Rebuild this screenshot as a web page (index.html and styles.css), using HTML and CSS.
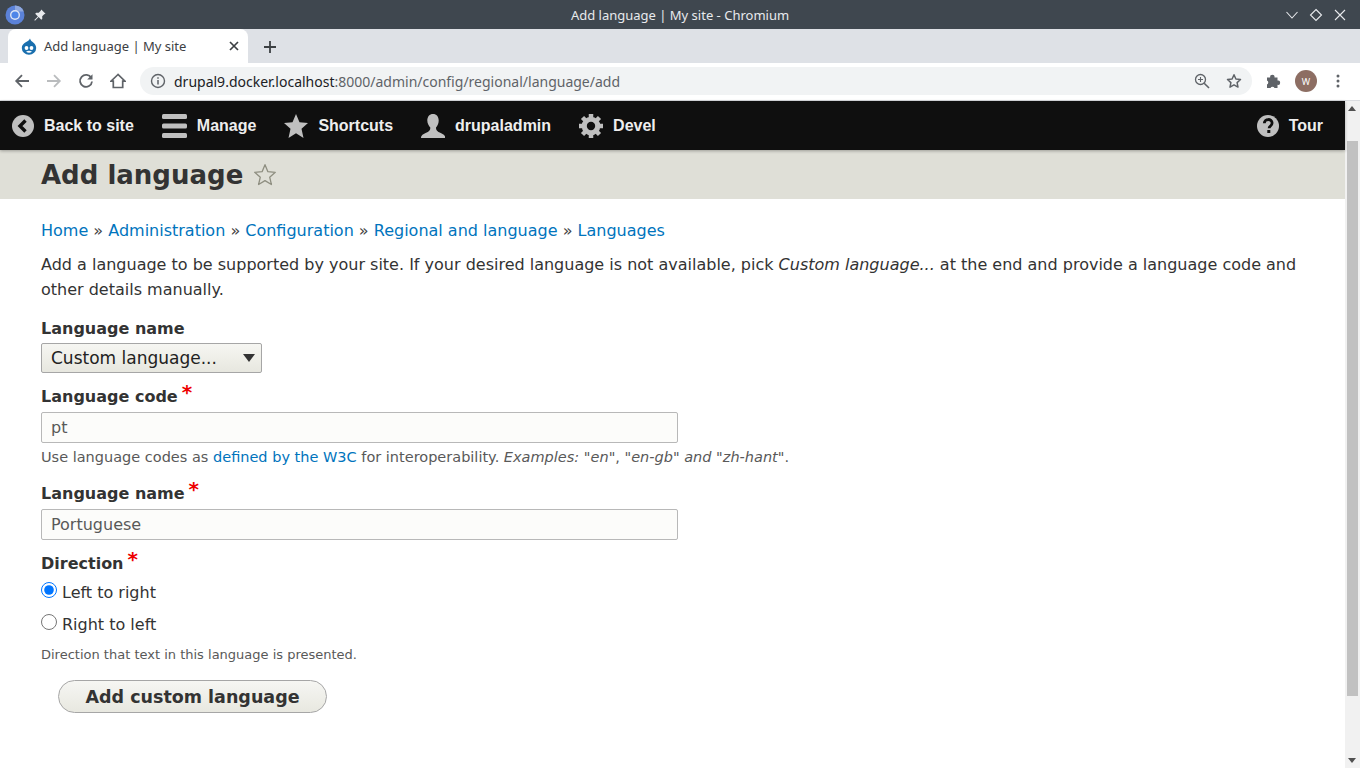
FILE: index.html
```html
<!DOCTYPE html>
<html lang="en">
<head>
<meta charset="utf-8">
<title>Add language | My site</title>
<link rel="stylesheet" href="styles.css">
</head>
<body>
<div class="window">
  <div class="titlebar">
    <div class="tb-left">
      <svg class="app-icon" width="20" height="20" viewBox="0 0 20 20"><circle cx="10" cy="10" r="9.5" fill="#5b82d8"/><path d="M10 .5A9.5 9.5 0 0 1 18.8 6.5H10z" fill="#8fa8de"/><circle cx="10" cy="10" r="5" fill="#dfe6f5"/><circle cx="10" cy="10" r="3.6" fill="#4f86e8"/></svg>
      <svg class="pin-icon" width="14" height="14" viewBox="0 0 14 14"><path d="M8.3 1.5l4.2 4.2-1.3.6-2 2 .1 2.5-1 1L5.6 9.100 2 12.700l-.7-.7 3.600-3.600L2.200 5.700l1-1 2.500.1 2-2z" fill="#e8eaed"/></svg>
    </div>
    <div class="tb-title">Add language | My site - Chromium</div>
    <div class="tb-controls">
      <svg width="14" height="14" viewBox="0 0 14 14"><path d="M1.500 4l5.500 6 5.500-6" fill="none" stroke="#e8eaed" stroke-width="1.100"/></svg>
      <svg width="14" height="14" viewBox="0 0 14 14"><path d="M7 1.500L12.500 7 7 12.500 1.500 7z" fill="none" stroke="#e8eaed" stroke-width="1.100"/></svg>
      <svg width="14" height="14" viewBox="0 0 14 14"><path d="M2 2l10 10M12 2L2 12" fill="none" stroke="#e8eaed" stroke-width="1.100"/></svg>
    </div>
  </div>
  <div class="tabstrip">
    <div class="tab">
      <svg class="fav" width="16" height="17" viewBox="0 0 16 17"><path d="M9 .5c.4 2 2 3 3.500 4.200C14 6 15.200 7.700 15.200 10A7.200 6.700 0 0 1 .8 10c0-2.600 1.700-4.300 3.500-5.400C6 3.600 8 2.600 9 .5z" fill="#1a6fae"/><circle cx="5.500" cy="10" r="1.900" fill="#fff"/><circle cx="10.500" cy="10" r="1.900" fill="#fff"/><path d="M5 13.800c2-1.300 4-1.300 6 0-2 1.200-4 1.200-6 0z" fill="#fff"/></svg>
      <span class="tab-title">Add language | My site</span>
      <svg class="tab-close" width="10" height="10" viewBox="0 0 10 10"><path d="M1 1l8 8M9 1L1 9" stroke="#3c4043" stroke-width="1.700" fill="none"/></svg>
    </div>
    <svg class="newtab" width="14" height="14" viewBox="0 0 14 14"><path d="M7 1v12M1 7h12" stroke="#3c4043" stroke-width="1.800" fill="none"/></svg>
  </div>
  <div class="navbar">
    <div class="nav-buttons">
      <svg width="16" height="16" viewBox="0 0 16 16"><path d="M15 8H2.500M8 2.200L2.200 8 8 13.800" fill="none" stroke="#5f6368" stroke-width="1.800"/></svg>
      <svg width="16" height="16" viewBox="0 0 16 16"><path d="M1 8h12.500M8 2.200L13.800 8 8 13.800" fill="none" stroke="#babcbe" stroke-width="1.800"/></svg>
      <svg width="16" height="16" viewBox="0 0 16 16"><path d="M13.300 5A6 6 0 1 0 14 8.500" fill="none" stroke="#5f6368" stroke-width="1.800"/><path d="M14.500 1.200v5.300H9.200z" fill="#5f6368"/></svg>
      <svg width="16" height="16" viewBox="0 0 16 16"><path d="M8 1.500L1 8.200h2.300V14.500h9.400V8.200H15z" fill="none" stroke="#5f6368" stroke-width="1.700"/></svg>
    </div>
    <div class="omnibox">
      <svg class="info" width="16" height="16" viewBox="0 0 16 16"><circle cx="8" cy="8" r="6.500" fill="none" stroke="#5f6368" stroke-width="1.400"/><path d="M8 7v4.500M8 4.300v1.500" stroke="#5f6368" stroke-width="1.500"/></svg>
      <span class="url"><span class="url-host">drupal9.docker.localhost</span>:8000/admin/config/regional/language/add</span>
      <svg class="omni-zoom" width="16" height="16" viewBox="0 0 16 16"><circle cx="6.500" cy="6.500" r="5" fill="none" stroke="#5f6368" stroke-width="1.300"/><path d="M10.200 10.200L15 15" stroke="#5f6368" stroke-width="1.600"/><path d="M6.500 4v5M4 6.500h5" stroke="#5f6368" stroke-width="1.100"/></svg>
      <svg class="omni-star" width="16" height="16" viewBox="0 0 16 16"><path d="M8 1.800l1.900 4.200 4.600.5-3.400 3.100.9 4.500L8 11.800l-4 2.300.9-4.500L1.500 6.500l4.600-.5z" fill="none" stroke="#5f6368" stroke-width="1.500" stroke-linejoin="round"/></svg>
    </div>
    <svg class="puzzle" width="16" height="16" viewBox="0 0 16 16"><path d="M1 4.500h3.200a2.200 2.200 0 1 1 4.300 0h3v3a2.200 2.200 0 1 1 0 4.300V15H8.500a2.200 2.200 0 0 0-4 0H1v-3.500a2.200 2.200 0 0 0 0-4z" fill="#5f6368"/></svg>
    <div class="avatar">W</div>
    <svg class="kebab" width="4" height="14" viewBox="0 0 4 14"><circle cx="2" cy="2" r="1.500" fill="#5f6368"/><circle cx="2" cy="7" r="1.500" fill="#5f6368"/><circle cx="2" cy="12" r="1.500" fill="#5f6368"/></svg>
  </div>
  <div class="viewport">
    <div class="page">
      <nav class="toolbar">
        <div class="tool-left">
          <a class="tool">
            <svg width="22" height="22" viewBox="0 0 22 22"><circle cx="11" cy="11" r="11" fill="#bfbfbf"/><path d="M13.500 5.500L8 11l5.500 5.500" fill="none" stroke="#0f0f0f" stroke-width="3.400"/></svg>
            <span>Back to site</span>
          </a>
          <a class="tool">
            <svg width="25" height="24" viewBox="0 0 25 24"><rect y="0" width="25" height="5" rx="1.500" fill="#bfbfbf"/><rect y="9.500" width="25" height="5" rx="1.500" fill="#bfbfbf"/><rect y="19" width="25" height="5" rx="1.500" fill="#bfbfbf"/></svg>
            <span>Manage</span>
          </a>
          <a class="tool">
            <svg width="24" height="24" viewBox="0 0 24 24"><path d="M12 0l3.500 8.300 8.500.7-6.500 5.700 2 9.300L12 19.200 4.500 24l2-9.300L0 9l8.500-.7z" fill="#bfbfbf"/></svg>
            <span>Shortcuts</span>
          </a>
          <a class="tool">
            <svg width="24" height="24" viewBox="0 0 24 24"><path d="M12 0c3.500 0 5.700 2.700 5.700 6.500 0 3-1.300 5.600-2.700 7 0 2 .5 3.300 2.500 4.500 2 1 5.500 2 6.500 4.200.3.800.3 1.300.3 1.800H0c0-.5 0-1 .3-1.800 1-2.200 4.500-3.200 6.500-4.200 2-1.200 2.500-2.500 2.500-4.500-1.400-1.400-3-4-3-7C6.300 2.700 8.500 0 12 0z" fill="#bfbfbf"/></svg>
            <span>drupaladmin</span>
          </a>
          <a class="tool">
            <svg width="24" height="24" viewBox="0 0 24 24"><circle cx="12" cy="12" r="6.800" fill="none" stroke="#bfbfbf" stroke-width="5"/><path d="M12 0v24M0 12h24M3.500 3.500l17 17M20.500 3.500l-17 17" stroke="#bfbfbf" stroke-width="4.500"/><circle cx="12" cy="12" r="4.200" fill="#0f0f0f"/></svg>
            <span>Devel</span>
          </a>
        </div>
        <a class="tool tool-tour">
          <svg width="22" height="22" viewBox="0 0 22 22"><circle cx="11" cy="11" r="11" fill="#bfbfbf"/><path d="M7.300 8.300c0-5 7.800-5 7.800-.2 0 3-3 2.800-3 5.200" fill="none" stroke="#0f0f0f" stroke-width="2.800"/><rect x="10.300" y="15" width="3" height="3" fill="#0f0f0f"/></svg>
          <span>Tour</span>
        </a>
      </nav>
      <header class="page-head">
        <h1>Add language</h1>
        <svg class="head-star" width="24" height="24" viewBox="0 0 24 24"><path d="M12 1.700l2.900 7 7.400.6-5.600 4.900 1.700 7.300L12 17.600l-6.400 3.900 1.700-7.300-5.600-4.900 7.400-.6z" fill="none" stroke="#8e8e80" stroke-width="1.300" stroke-linejoin="round"/></svg>
      </header>
      <main class="content">
        <div class="crumbs"><a>Home</a> » <a>Administration</a> » <a>Configuration</a> » <a>Regional and language</a> » <a>Languages</a></div>
        <p class="intro">Add a language to be supported by your site. If your desired language is not available, pick <em>Custom language...</em> at the end and provide a language code and other details manually.</p>
        <div class="field field-select">
          <label class="lbl">Language name</label>
          <div class="select"><span>Custom language...</span><i class="caret"></i></div>
        </div>
        <div class="field field-code">
          <label class="lbl">Language code<span class="req">*</span></label>
          <div class="input">pt</div>
          <div class="desc">Use language codes as <a>defined by the W3C</a> for interoperability. <em>Examples:</em> "<em>en</em>", "<em>en-gb</em>" <em>and</em> "<em>zh-hant</em>".</div>
        </div>
        <div class="field field-name">
          <label class="lbl">Language name<span class="req">*</span></label>
          <div class="input">Portuguese</div>
        </div>
        <div class="field field-dir">
          <label class="lbl">Direction<span class="req">*</span></label>
          <div class="radio"><input type="radio" name="d" checked><span>Left to right</span></div>
          <div class="radio"><input type="radio" name="d"><span>Right to left</span></div>
          <div class="desc-small">Direction that text in this language is presented.</div>
        </div>
        <div class="submit">Add custom language</div>
      </main>
    </div>
    <div class="scrollbar">
      <div class="sb-up"></div>
      <div class="sb-track"><div class="sb-thumb"></div></div>
      <div class="sb-down"></div>
    </div>
  </div>
</div>
</body>
</html>
```
FILE: styles.css
```css
* { box-sizing: border-box; }
html, body { margin: 0; padding: 0; height: 100%; overflow: hidden; }
body { font-family: "DejaVu Sans", sans-serif; background: #fff; color: #333; }
svg { display: block; flex: none; }
.window { width: 1360px; height: 768px; display: flex; flex-direction: column; }

.titlebar { height: 29px; background: #3f474f; display: flex; align-items: center; position: relative; padding: 0 13px 0 5px; justify-content: space-between; }
.tb-left { display: flex; align-items: center; gap: 8px; }
.tb-title { font: 13px "Noto Sans", sans-serif; color: #e8eaed; flex: 1; text-align: center; padding-left: 28px; }
.tb-controls { display: flex; gap: 10px; }

.tabstrip { height: 34px; background: #dee1e6; display: flex; align-items: flex-end; padding-left: 8px; }
.tab { width: 240px; height: 34px; background: #fff; border-radius: 8px 8px 0 0; display: flex; align-items: center; padding: 0 9px 0 13px; }
.fav { margin-right: 7px; }
.tab-title { font: 13px "Noto Sans", sans-serif; color: #3c4043; flex: 1; }
.newtab { margin: 0 0 9px 15px; }

.navbar { height: 38px; background: #fff; border-bottom: 1px solid #dadce0; display: flex; align-items: center; padding: 0 0 1px 14px; }
.nav-buttons { display: flex; gap: 16px; }
.omnibox { width: 1112px; height: 28px; background: #f1f3f4; border-radius: 14px; margin-left: 14px; display: flex; align-items: center; padding: 0 10px 0 10px; }
.url { font: 14px "Noto Sans", sans-serif; color: #5f6368; margin-left: 8px; flex: 1; }
.url-host { color: #202124; }
.omni-star { margin-left: 16px; }
.puzzle { margin-left: 14px; }
.avatar { width: 22px; height: 22px; border-radius: 50%; background: #8d6e63; color: #fff; font: 9px "Noto Sans", sans-serif; display: flex; align-items: center; justify-content: center; margin-left: 13px; }
.kebab { margin-left: 19px; }

.viewport { flex: 1; display: flex; min-height: 0; }
.page { flex: 1; min-width: 0; }

.toolbar { height: 49px; background: #0f0f0f; box-shadow: 0 1px 3px rgba(0,0,0,.3); display: flex; justify-content: space-between; position: relative; }
.tool-left { display: flex; }
.tool { display: flex; align-items: center; gap: 10px; padding: 0 16px 0 12px; color: #eee; font: bold 16px "Liberation Sans", sans-serif; }
.tool-tour { padding-right: 22px; }

.page-head { height: 49px; background: #dfdfd7; display: flex; align-items: center; padding-left: 41px; gap: 10px; }
h1 { margin: 0; font: bold 26px "DejaVu Sans", sans-serif; color: #333; }

.content { padding: 0 41px; font-size: 16px; }
.crumbs { margin-top: 22px; line-height: 20px; color: #444; }
a { color: #0074bd; }
.intro { margin: 11px 0 0; line-height: 25px; color: #333; }
.field { }
.lbl { display: block; font-weight: bold; color: #333; line-height: 20px; }
.req { color: #e00; margin-left: 4px; font-size: 20px; line-height: 12px; position: relative; top: -3px; }
.field-select { margin-top: 17px; }
.select { margin-top: 4px; width: 221px; height: 30px; background: linear-gradient(#f6f6f2, #e7e7df); border: 1px solid #a6a6a6; border-radius: 2px; display: flex; align-items: center; justify-content: space-between; padding: 0 6px 0 9px; color: #222; font-size: 17px; }
.caret { width: 0; height: 0; border-left: 6px solid transparent; border-right: 6px solid transparent; border-top: 8px solid #333; }
.field-code { margin-top: 14px; }
.input { margin-top: 5px; width: 637px; height: 31px; background: #fcfcfa; border: 1px solid #b8b8b8; border-radius: 2px; display: flex; align-items: center; padding-left: 9px; color: #595959; }
.desc { margin-top: 3px; font-size: 14.500px; line-height: 22px; color: #595959; }
.field-name { margin-top: 16px; }
.field-dir { margin-top: 14px; }
.radio { display: flex; align-items: center; height: 32px; color: #333; }
.radio input { margin: 0 5px 0 0; width: 16px; height: 16px; position: relative; top: -2px; accent-color: #0075ff; }
.field-dir .lbl { margin-bottom: 2px; }
.desc-small { font-size: 13px; line-height: 20px; color: #595959; margin-top: 5px; }
.submit { margin: 15px 0 0 17px; width: 269px; height: 33px; border: 1px solid #a6a6a6; border-radius: 17px; background: linear-gradient(#f6f6f3, #e8e8e0); display: flex; align-items: center; justify-content: center; font-weight: bold; font-size: 17.500px; color: #333; }

.scrollbar { width: 15px; background: #f1f1f1; display: flex; flex-direction: column; }
.sb-up, .sb-down { height: 15px; position: relative; }
.sb-up::after { content: ""; position: absolute; left: 3px; top: 5px; border-left: 4px solid transparent; border-right: 4px solid transparent; border-bottom: 5px solid #505050; }
.sb-down::after { content: ""; position: absolute; left: 3px; top: 5px; border-left: 4px solid transparent; border-right: 4px solid transparent; border-top: 5px solid #505050; }
.sb-track { flex: 1; padding: 25px 2px 57px; }
.sb-thumb { height: 100%; background: #c1c1c1; }
```
